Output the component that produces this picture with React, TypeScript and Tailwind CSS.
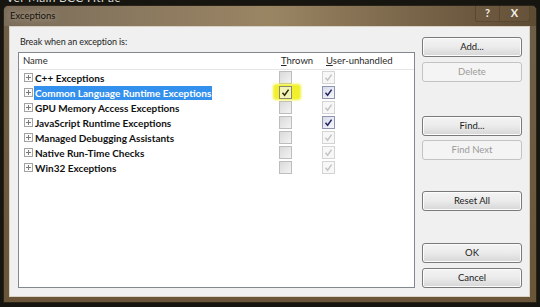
import React from "react"

type Row = { name: string; thrown: boolean; user: "off" | "on" | "dim"; selected?: boolean }

const rows: Row[] = [
  { name: "C++ Exceptions", thrown: false, user: "dim" },
  { name: "Common Language Runtime Exceptions", thrown: true, user: "on", selected: true },
  { name: "GPU Memory Access Exceptions", thrown: false, user: "dim" },
  { name: "JavaScript Runtime Exceptions", thrown: false, user: "on" },
  { name: "Managed Debugging Assistants", thrown: false, user: "dim" },
  { name: "Native Run-Time Checks", thrown: false, user: "dim" },
  { name: "Win32 Exceptions", thrown: false, user: "dim" },
]

function Expander() {
  return (
    <svg width="9" height="9" viewBox="0 0 9 9" className="shrink-0">
      <rect x="0.5" y="0.5" width="8" height="8" fill="#fbfbfb" stroke="#a3a3a3" />
      <path d="M2 4.5h5M4.5 2v5" stroke="#7a7a7a" strokeWidth="1" />
    </svg>
  )
}

function Check({ state }: { state: "off" | "on" | "dim" | "thrown" | "blank" }) {
  const dim = state === "dim" || state === "off"
  return (
    <div
      className={
        state === "on"
          ? "w-[13px] h-[13px] border border-[#8f95b0] bg-gradient-to-br from-[#d9dcea] to-[#f6f7fb] flex items-center justify-center"
          : state === "thrown"
          ? "w-[13px] h-[13px] border border-[#8a8a6a] bg-[#f3f3b8] flex items-center justify-center"
          : state === "blank"
          ? "w-[13px] h-[13px] border border-[#bdbdbd] bg-gradient-to-br from-[#dadada] to-[#f3f3f3]"
          : "w-[13px] h-[13px] border border-[#d4d4d4] bg-[#f7f7f7] flex items-center justify-center"
      }
    >
      {state !== "blank" && (
        <svg width="9" height="9" viewBox="0 0 9 9">
          <path
            d="M1.5 4.8 L3.6 7.2 L7.6 1.6"
            fill="none"
            stroke={state === "on" ? "#23265e" : state === "thrown" ? "#2a2a10" : dim ? "#c4c4c4" : "#333"}
            strokeWidth="1.5"
          />
        </svg>
      )}
    </div>
  )
}

function Btn({ label, disabled }: { label: string; disabled?: boolean }) {
  return (
    <div
      className={
        disabled
          ? "h-[20px] w-[100px] rounded-[3px] border border-[#c3c3c3] bg-[#f4f4f4] flex items-center justify-center text-[9.5px] text-[#9a9a9a]"
          : "h-[20px] w-[100px] rounded-[3px] border border-[#7a7a7a] bg-gradient-to-b from-[#f4f4f4] via-[#ebebeb] to-[#d6d6d6] flex items-center justify-center text-[9.5px] text-[#1b1b1b] shadow-[inset_0_0_0_1px_#fcfcfc]"
      }
    >
      {label}
    </div>
  )
}

export default function App() {
  return (
    <div className="w-[540px] h-[307px] bg-[#16150f] overflow-hidden flex flex-col font-['Lato',sans-serif]">
      <div className="h-[5px] overflow-hidden pl-[6px] shrink-0">
        <div className="-mt-[8px] text-[12px] leading-[12px] text-[#d8d8d0] tracking-wide">Ver Main BCC HtPac</div>
      </div>

      <div className="mx-[3px] w-[534px] h-[298px] rounded-t-[5px] border border-[#2a2418] bg-gradient-to-b from-[#6f5f49] to-[#6a5538] flex flex-col">
        <div className="h-[20px] shrink-0 flex items-stretch rounded-t-[5px] bg-gradient-to-r from-[#7b6d5b] via-[#9a8563] to-[#5e4b34]">
          <div className="flex-1 flex items-center pl-[6px] text-[9.5px] text-[#15120d] [text-shadow:0_0_6px_#c9bda8]">
            Exceptions
          </div>
          <div className="flex items-start mr-[6px]">
            <div className="w-[25px] h-[16px] border border-[#5a4930] border-t-0 rounded-bl-[3px] bg-[#6d5a40]/50 flex items-center justify-center text-[11px] font-bold text-[#f4efe6]">
              ?
            </div>
            <div className="w-[30px] h-[16px] border border-[#5a4930] border-t-0 border-l-0 rounded-br-[3px] bg-[#6d5a40]/50 flex items-center justify-center text-[11px] font-bold text-[#f4efe6]">
              X
            </div>
          </div>
        </div>

        <div className="ml-[5px] mr-[6px] mb-[5px] flex-1 bg-[#f0f0f0] border border-[#d9d3c6] flex">
          <div className="flex-1 flex flex-col pl-[8px] pt-[8px] pb-[8px]">
            <div className="h-[14px] pl-[2px] text-[9px] tracking-[-0.1px] leading-[14px] text-[#1e1e1e]">Break when an exception is:</div>
            <div className="mt-[3px] flex-1 border border-[#828790] bg-white flex flex-col">
              <div className="h-[17px] flex items-center text-[9.5px] text-[#2a2a2a] border-b border-[#e6e6e6]">
                <div className="w-[260px] pl-[4px]">Name</div>
                <div className="w-[43px] pl-[2px]">
                  <span className="underline">T</span>hrown
                </div>
                <div className="pl-[4px]">
                  <span className="underline">U</span>ser-unhandled
                </div>
              </div>
              {rows.map((r) => (
                <div key={r.name} className="h-[15px] flex items-center">
                  <div className="w-[260px] flex items-center pl-[5px] gap-[1px]">
                    <Expander />
                    <span
                      className={
                        r.selected
                          ? "h-[14px] px-[1px] bg-[#3390ec] text-white text-[10px] font-bold leading-[14px] whitespace-nowrap"
                          : "h-[14px] px-[1px] text-[#111] text-[10px] font-bold leading-[14px] whitespace-nowrap"
                      }
                    >
                      {r.name}
                    </span>
                  </div>
                  <div className="w-[43px] flex">
                    {r.thrown ? (
                      <div className="relative">
                        <div className="absolute -left-[6px] -top-[2px] w-[28px] h-[16px] bg-[#f1f02c] rounded-[3px] blur-[1px]" />
                        <div className="relative">
                          <Check state="thrown" />
                        </div>
                      </div>
                    ) : (
                      <Check state="blank" />
                    )}
                  </div>
                  <div className="flex">
                    <Check state={r.user} />
                  </div>
                </div>
              ))}
            </div>
          </div>

          <div className="w-[100px] mx-[7px] pt-[10px] flex flex-col">
            <Btn label="Add..." />
            <div className="mt-[5px]">
              <Btn label="Delete" disabled />
            </div>
            <div className="mt-[34px]">
              <Btn label="Find..." />
            </div>
            <div className="mt-[4px]">
              <Btn label="Find Next" disabled />
            </div>
            <div className="mt-[31px]">
              <Btn label="Reset All" />
            </div>
            <div className="mt-[32px]">
              <Btn label="OK" />
            </div>
            <div className="mt-[5px]">
              <Btn label="Cancel" />
            </div>
          </div>
        </div>
      </div>
    </div>
  )
}
